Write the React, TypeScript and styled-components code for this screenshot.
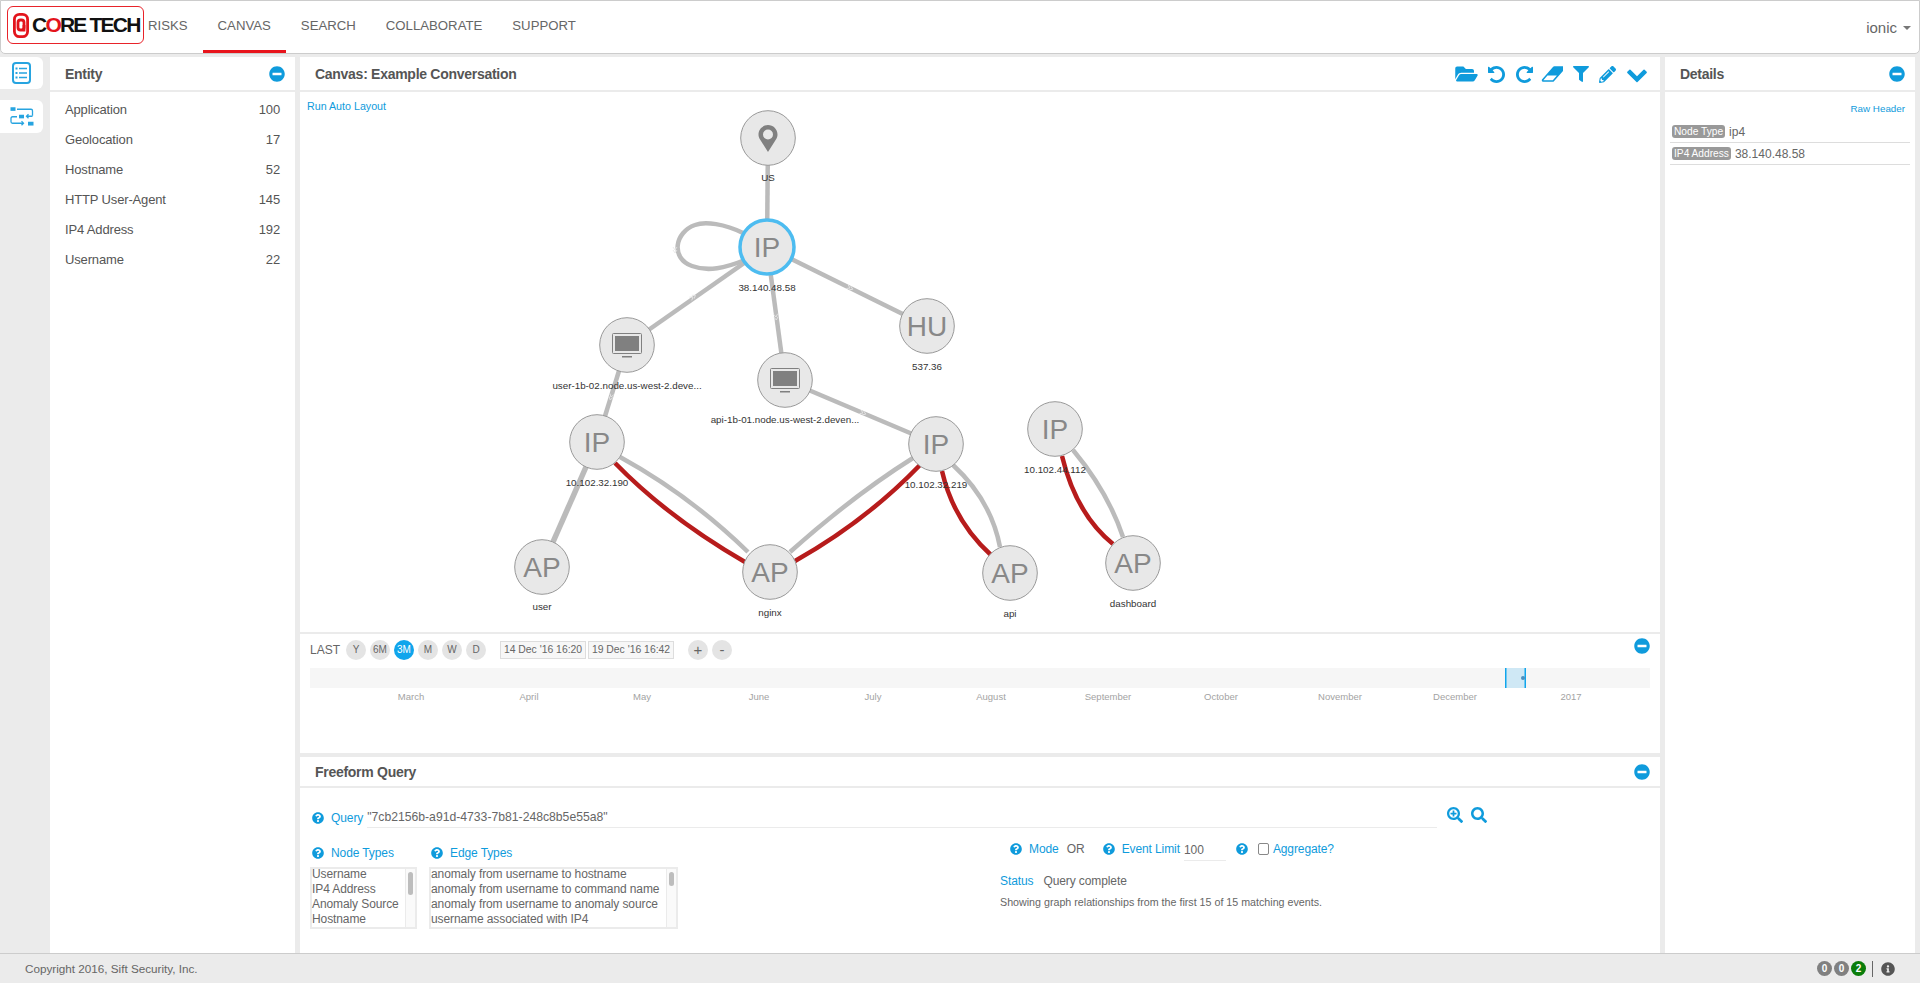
import React from "react";
import styled, { createGlobalStyle } from "styled-components";
import {
  FaFilter,
  FaFolderOpen,
  FaInfoCircle,
  FaMinusCircle,
  FaPencilAlt,
  FaQuestionCircle,
  FaSearch,
  FaSearchPlus,
} from "react-icons/fa";

const BLUE = "#0f9bdc";
const FONT = `"Liberation Sans", Arial, sans-serif`;

const GlobalStyle = createGlobalStyle`
  html, body {
    margin: 0;
    padding: 0;
    height: 100%;
    overflow: hidden;
    background: #ebebeb;
    font-family: ${FONT};
    color: #666;
  }
  * {
    box-sizing: border-box;
  }
`;

const Page = styled.div`
  display: flex;
  flex-direction: column;
  height: 100vh;
`;

const Header = styled.header`
  display: flex;
  align-items: stretch;
  flex: 0 0 54px;
  padding-left: 6px;
  background: #fff;
  border: 1px solid #ccc;
  border-radius: 0 0 5px 5px;
`;

const Logo = styled.div`
  display: flex;
  align-items: center;
  gap: 3px;
  align-self: flex-start;
  width: 137px;
  height: 38px;
  margin-top: 5px;
  padding-left: 5px;
  border: 1px solid #e8232a;
  border-radius: 6px;
`;

const LogoText = styled.span`
  font-size: 21px;
  font-weight: 700;
  letter-spacing: -1.8px;
  color: #111;
  white-space: nowrap;

  em {
    font-style: normal;
    color: #e3141c;
  }
`;

const Nav = styled.nav`
  display: flex;
  margin-left: -11px;
`;

const NavItem = styled.a<{ $active?: boolean }>`
  display: flex;
  align-items: center;
  padding: 0 15px;
  font-size: 13.2px;
  color: #666;
  border-bottom: 3px solid ${({ $active }) => ($active ? "#e8141c" : "transparent")};
`;

const UserMenu = styled.div`
  display: flex;
  align-items: center;
  gap: 6px;
  margin-left: auto;
  padding: 1px 8px 0 0;
  font-size: 15px;
  color: #666;

  &::after {
    content: "";
    border-top: 4px solid #777;
    border-left: 4px solid transparent;
    border-right: 4px solid transparent;
  }
`;

const Main = styled.main`
  display: grid;
  grid-template-columns: 45px 245px 1360px 250px;
  column-gap: 5px;
  flex: 1;
  min-height: 0;
  padding-top: 3px;
`;

const Sidebar = styled.div`
  display: flex;
  flex-direction: column;
  gap: 11px;
  padding-right: 2px;
`;

const SideTab = styled.div<{ $tall?: boolean }>`
  display: flex;
  align-items: center;
  justify-content: center;
  height: ${({ $tall }) => ($tall ? "33px" : "32px")};
  background: #fff;
  border-radius: 0 6px 6px 0;
`;

const Panel = styled.section`
  display: flex;
  flex-direction: column;
  height: 100%;
  background: #fff;
`;

const PanelHeader = styled.div<{ $compact?: boolean }>`
  display: flex;
  align-items: center;
  justify-content: space-between;
  flex: 0 0 ${({ $compact }) => ($compact ? "31px" : "35px")};
  padding: ${({ $compact }) => ($compact ? "0" : "1px")} 10px 0 15px;
  border-bottom: 2px solid #ebebeb;
`;

const PanelTitle = styled.h2`
  margin: 0;
  font-size: 14px;
  font-weight: 700;
  letter-spacing: -0.28px;
  color: #555;
`;

const CollapseIcon = styled(FaMinusCircle)`
  width: 16px;
  height: 16px;
  color: ${BLUE};
`;

const EntityList = styled.ul`
  margin: 0;
  padding: 2px 15px 0;
  list-style: none;
`;

const EntityRow = styled.li`
  display: flex;
  justify-content: space-between;
  align-items: center;
  height: 30px;
  font-size: 13px;
  letter-spacing: -0.15px;
  color: #555;
`;

const CenterColumn = styled.div`
  display: flex;
  flex-direction: column;
  gap: 4px;
  min-height: 0;
`;

const CanvasPanel = styled(Panel)`
  flex: 0 0 696px;
  height: auto;
`;

const Toolbar = styled.div`
  display: flex;
  align-items: center;
  margin-right: 2px;
  color: ${BLUE};
`;

const ToolIcon = styled.span<{ $w: number; $h: number; $ml: number }>`
  display: flex;
  margin-left: ${({ $ml }) => $ml}px;

  svg {
    width: ${({ $w }) => $w}px;
    height: ${({ $h }) => $h}px;
  }
`;

const GraphArea = styled.div`
  position: relative;
  flex: 0 0 542px;
  border-bottom: 2px solid #ebebeb;
`;

const GraphSvg = styled.svg`
  display: block;
`;

const AutoLayoutLink = styled.a`
  position: absolute;
  top: 8px;
  left: 7px;
  font-size: 10.7px;
  color: ${BLUE};
`;

const NodeLabel = styled.text`
  font-family: ${FONT};
  font-size: 9.8px;
  fill: #333;
  text-anchor: middle;
`;

const NodeGlyph = styled.text`
  font-family: ${FONT};
  font-size: 28px;
  fill: #888;
  text-anchor: middle;
`;

const Timeline = styled.div`
  display: flex;
  flex-direction: column;
  flex: 1;
`;

const RangeBar = styled.div`
  display: flex;
  align-items: center;
  flex: 0 0 30px;
  padding: 1px 10px 0 10px;
`;

const LastLabel = styled.span`
  width: 36px;
  font-size: 12px;
  color: #666;
`;

const RangeButton = styled.span<{ $active?: boolean }>`
  display: flex;
  align-items: center;
  justify-content: center;
  width: 20px;
  height: 20px;
  margin-right: 4px;
  border-radius: 50%;
  font-size: 10px;
  background: ${({ $active }) => ($active ? "#10a5ec" : "#e4e4e4")};
  color: ${({ $active }) => ($active ? "#fff" : "#666")};
`;

const DateBox = styled.span`
  display: flex;
  align-items: center;
  justify-content: center;
  width: 86px;
  height: 18px;
  margin-right: 2px;
  font-size: 10.4px;
  color: #666;
  background: #f7f7f7;
  border: 1px solid #ddd;
`;

const ZoomButton = styled(RangeButton)`
  font-size: 15px;
  line-height: 1;
`;

const DateGroup = styled.div`
  display: flex;
  margin: 0 12px 0 10px;
`;

const CollapseRight = styled.div`
  display: flex;
  margin-left: auto;
  margin-top: -8px;
`;

const AxisLabel = styled.text`
  font-family: ${FONT};
  font-size: 9.5px;
  fill: #a3a3a3;
  text-anchor: middle;
`;

const QueryPanel = styled(Panel)`
  flex: 1;
  height: auto;
  min-height: 0;
`;

const QueryBody = styled.div`
  display: flex;
  flex-direction: column;
  padding: 20px 0 0 10px;
`;

const QueryRow = styled.div`
  display: flex;
  align-items: center;
`;

const HelpIcon = styled(FaQuestionCircle)<{ $ml?: number }>`
  flex: none;
  width: 12px;
  height: 12px;
  margin-left: ${({ $ml }) => $ml ?? 2}px;
  margin-right: 7px;
  color: ${BLUE};
`;

const BlueLabel = styled.label`
  font-size: 12px;
  letter-spacing: -0.1px;
  color: ${BLUE};
  white-space: nowrap;
`;

const QueryInput = styled.div`
  width: 1070px;
  height: 20px;
  margin-left: 4px;
  font-size: 12.2px;
  line-height: 18px;
  color: #666;
  border-bottom: 1px solid #ebebeb;
`;

const SearchIcons = styled.div`
  display: flex;
  gap: 8px;
  margin: -6px 0 0 10px;
  color: ${BLUE};

  svg {
    width: 16px;
    height: 16px;
  }
`;

const LowerRow = styled.div`
  display: flex;
  margin-top: 18px;
`;

const TypesColumn = styled.div`
  display: flex;
  gap: 12px;
  flex: 0 0 690px;
`;

const TypeGroup = styled.div`
  display: flex;
  flex-direction: column;
  gap: 7px;
`;

const ListBox = styled.div<{ $width: number }>`
  display: flex;
  width: ${({ $width }) => $width}px;
  height: 62px;
  border: 2px solid #ebebeb;
`;

const ListText = styled.div`
  flex: 1;
  font-size: 12px;
  line-height: 15px;
  letter-spacing: -0.1px;
  color: #666;
  padding-left: 0;
  margin-top: -2px;
  white-space: nowrap;
`;

const ScrollTrack = styled.div`
  flex: 0 0 10px;
  padding: 3px 2px 0;
  background: #fafafa;
  border-left: 1px solid #ebebeb;
`;

const ScrollThumb = styled.div<{ $height: number }>`
  height: ${({ $height }) => $height}px;
  border-radius: 3px;
  background: #bdbdbd;
`;

const OptionsColumn = styled.div`
  display: flex;
  flex-direction: column;
`;

const OptionRow = styled.div`
  display: flex;
  align-items: center;
  height: 20px;
  margin-left: 8px;
  margin-top: -7px;
`;

const OptionValue = styled.span<{ $underline?: boolean; $ml?: number }>`
  width: ${({ $underline }) => ($underline ? "42px" : "auto")};
  margin-left: ${({ $ml }) => $ml ?? 8}px;
  font-size: 12px;
  line-height: 18px;
  color: #666;
  border-bottom: ${({ $underline }) => ($underline ? "1px solid #ebebeb" : "none")};
  ${({ $underline }) => ($underline ? "margin-top: 3px; height: 20px;" : "")}
`;

const FakeCheckbox = styled.span`
  width: 11px;
  height: 12px;
  margin: 0 4px 0 3px;
  background: #fff;
  border: 1px solid #888;
  border-radius: 2px;
`;

const StatusRow = styled.div`
  display: flex;
  gap: 10px;
  margin-top: 15px;
  font-size: 12px;
  letter-spacing: -0.1px;
  color: #666;
`;

const StatusNote = styled.div`
  margin-top: 8px;
  font-size: 10.7px;
  color: #666;
`;

const DetailsBody = styled.div`
  display: flex;
  flex-direction: column;
  padding: 10px 5px 0;
`;

const RawHeaderLink = styled.a`
  align-self: flex-end;
  margin: 0 5px 6px 0;
  font-size: 9.8px;
  line-height: 13px;
  color: ${BLUE};
`;

const DetailRow = styled.div`
  display: flex;
  align-items: center;
  gap: 4px;
  height: 22px;
  padding-left: 2px;
  font-size: 12px;
  color: #666;
  border-bottom: 1px solid #ddd;
`;

const DetailBadge = styled.span`
  padding: 1px 2px;
  font-size: 10.2px;
  line-height: 11px;
  color: #fff;
  background: #999;
  border-radius: 3px;
`;

const Footer = styled.footer`
  display: flex;
  align-items: center;
  flex: 0 0 30px;
  padding: 0 25px 0 25px;
  font-size: 11.7px;
  color: #666;
  border-top: 1px solid #ccc;
`;

const FooterStatus = styled.div`
  display: flex;
  align-items: center;
  gap: 2px;
  margin-left: auto;
`;

const CountDot = styled.span<{ $ok?: boolean }>`
  display: flex;
  align-items: center;
  justify-content: center;
  width: 15px;
  height: 15px;
  border-radius: 50%;
  font-size: 10px;
  font-weight: 700;
  color: #fff;
  background: ${({ $ok }) => ($ok ? "#0a7d0a" : "#808080")};
`;

const FooterDivider = styled.span`
  width: 1px;
  height: 16px;
  margin: 0 6px 0 4px;
  background: #666;
`;

const InfoIcon = styled(FaInfoCircle)`
  width: 14px;
  height: 14px;
  color: #555;
`;

type GraphNode = {
  x: number;
  y: number;
  glyph?: string;
  icon?: "pin" | "host";
  label: string;
  labelY: number;
  selected?: boolean;
};

const nodes: GraphNode[] = [
  { x: 768, y: 138, icon: "pin", label: "US", labelY: 181 },
  { x: 767, y: 247, glyph: "IP", label: "38.140.48.58", labelY: 291, selected: true },
  { x: 627, y: 345, icon: "host", label: "user-1b-02.node.us-west-2.deve...", labelY: 389 },
  { x: 785, y: 380, icon: "host", label: "api-1b-01.node.us-west-2.deven...", labelY: 423 },
  { x: 927, y: 326, glyph: "HU", label: "537.36", labelY: 370 },
  { x: 597, y: 442, glyph: "IP", label: "10.102.32.190", labelY: 486 },
  { x: 936, y: 444, glyph: "IP", label: "10.102.32.219", labelY: 488 },
  { x: 1055, y: 429, glyph: "IP", label: "10.102.44.112", labelY: 473 },
  { x: 542, y: 567, glyph: "AP", label: "user", labelY: 610 },
  { x: 770, y: 572, glyph: "AP", label: "nginx", labelY: 616 },
  { x: 1010, y: 573, glyph: "AP", label: "api", labelY: 617 },
  { x: 1133, y: 563, glyph: "AP", label: "dashboard", labelY: 607 },
];

const grayEdges = [
  "M768 138 L767 247",
  "M743 233 C725 224 705 221 695 225 C675 232 670 258 692 266 C708 272 725 268 745 260",
  "M767 247 L627 345",
  "M767 247 L785 380",
  "M767 247 L927 326",
  "M627 345 L597 442",
  "M785 380 L936 444",
  "M620 457 Q690 495.5 748 552",
  "M913 458 Q854 495 790 552",
  "M953 465 Q991 500 1000 547",
  "M1073 450 Q1108 492 1123 537",
];

const redEdges = [
  "M615 463 Q668 517.5 745 562",
  "M920 465 Q866 521 795 561",
  "M942 471 Q953.5 521 991 555",
  "M1062 456 Q1076 514 1113 544",
];

const edgeMarks = [
  { x: 693, y: 297, r: -36 },
  { x: 776, y: 317, r: 83 },
  { x: 850, y: 288, r: 26 },
  { x: 611, y: 397, r: 107 },
  { x: 863, y: 413, r: 23 },
  { x: 675, y: 250, r: 90 },
];

const months = [
  ["March", 411],
  ["April", 529],
  ["May", 642],
  ["June", 759],
  ["July", 873],
  ["August", 991],
  ["September", 1108],
  ["October", 1221],
  ["November", 1340],
  ["December", 1455],
  ["2017", 1571],
] as const;

const entities = [
  ["Application", 100],
  ["Geolocation", 17],
  ["Hostname", 52],
  ["HTTP User-Agent", 145],
  ["IP4 Address", 192],
  ["Username", 22],
] as const;

const ranges = ["Y", "6M", "3M", "M", "W", "D"];

const EraserIcon = () => (
  <svg viewBox="0 0 1792 1792" fill="currentColor">
    <path d="M960 1408l336-384h-768l-336 384h768zm1013-1077q15 34 9.5 71.5t-30.5 65.5l-896 1024q-38 44-96 44h-768q-38 0-69.5-20.5t-47.5-54.5q-15-34-9.5-71.5t30.5-65.5l896-1024q38-44 96-44h768q38 0 70 20.5t47 54.5z" />
  </svg>
);

const UNDO_PATH =
  "M1664 896q0 156-61 298t-164 245-245 164-298 61q-172 0-327-72.5t-264-204.5q-7-10-6.5-22.5t8.5-20.5l137-138q10-9 25-9 16 2 23 12 73 95 179 147t225 52q104 0 198.5-40.5t163.5-109.5 109.5-163.5 40.5-198.5-40.5-198.5-109.5-163.5-163.5-109.5-198.5-40.5q-98 0-188 35.5t-160 101.5l137 138q31 30 14 69-17 40-59 40h-448q-26 0-45-19t-19-45v-448q0-42 40-59 39-17 69 14l130 129q107-101 244.5-156.5t284.5-55.5q156 0 298 61t245 164 164 245 61 298z";

const UndoIcon = () => (
  <svg viewBox="128 128 1536 1536" fill="currentColor">
    <path d={UNDO_PATH} />
  </svg>
);

const RedoIcon = () => (
  <svg viewBox="128 128 1536 1536" fill="currentColor">
    <path transform="matrix(-1 0 0 1 1792 0)" d={UNDO_PATH} />
  </svg>
);

const ChevronIcon = () => (
  <svg viewBox="0 0 1792 1792" fill="currentColor">
    <path d="M1683 808l-742 741q-19 19-45 19t-45-19l-742-741q-19-19-19-45.5t19-45.5l166-165q19-19 45-19t45 19l531 531 531-531q19-19 45-19t45 19l166 165q19 19 19 45.5t-19 45.5z" />
  </svg>
);

const ListIcon = () => (
  <svg width="19" height="22" viewBox="0 0 19 22" fill="none" stroke="#27a4e0">
    <rect x="1" y="1" width="17" height="20" rx="3" strokeWidth="2" />
    <path d="M7 6.5h8M7 11h8M7 15.5h8" strokeWidth="1.6" />
    <path d="M3.5 6.5h2M3.5 11h2M3.5 15.5h2" strokeWidth="1.8" />
  </svg>
);

const FlowIcon = () => (
  <svg width="24" height="21" viewBox="0 0 24 19.5" fill="none" stroke="#27a4e0" strokeWidth="1.3">
    <rect x="0.5" y="0.5" width="5" height="3.6" fill="#27a4e0" stroke="none" />
    <path d="M7 2.5H21a1.5 1.5 0 0 1 1.5 1.5V9" />
    <rect x="9" y="8" width="5" height="3.6" fill="#27a4e0" stroke="none" />
    <path d="M7 10H2.5A1.5 1.5 0 0 0 1 11.5V15a1.5 1.5 0 0 0 1.5 1.5H13" />
    <path d="M22.5 9.5H16.5M18.5 7.5l-2 2 2 2M11.5 14.5l2 2-2 2" />
    <rect x="18" y="15" width="5.5" height="3.8" fill="#27a4e0" stroke="none" />
  </svg>
);

const LogoMark = () => (
  <svg width="16" height="25" viewBox="0 0 16 25" fill="none" stroke="#e3141c" strokeWidth="2.8">
    <rect x="1.4" y="1.4" width="13.2" height="22.2" rx="5" />
    <rect x="5" y="7" width="6" height="10" rx="2.5" />
    <path d="M11 12v6.5" />
  </svg>
);

const PinGlyph = ({ x, y }: { x: number; y: number }) => (
  <path
    transform={`translate(${x - 9.5} ${y - 13})`}
    fill="#808080"
    fillRule="evenodd"
    d="M9.5 0C4.3 0 0 4.2 0 9.5c0 2 .6 3.3 1.4 4.8L9.5 27l8.1-12.7c.8-1.5 1.4-2.8 1.4-4.8C19 4.2 14.7 0 9.5 0zm0 14.5a5 5 0 1 1 0-10 5 5 0 0 1 0 10z"
  />
);

const HostGlyph = ({ x, y }: { x: number; y: number }) => (
  <g transform={`translate(${x - 15} ${y - 12})`}>
    <rect x="0.5" y="0.5" width="29" height="20" rx="1" fill="none" stroke="#808080" />
    <rect x="3" y="3" width="24" height="15" fill="#808080" />
    <rect x="10" y="23" width="10" height="1.5" fill="#808080" />
  </g>
);

const NetworkGraph = () => (
  <GraphSvg width="1360" height="540" viewBox="300 92 1360 540">
    {grayEdges.map((d) => (
      <path key={d} d={d} fill="none" stroke="#bbb" strokeWidth="4.5" />
    ))}
    <path d="M597 442 L542 567" fill="none" stroke="#bbb" strokeWidth="5.5" />
    {redEdges.map((d) => (
      <path key={d} d={d} fill="none" stroke="#b71c1c" strokeWidth="4.5" />
    ))}
    {edgeMarks.map((m) => (
      <path
        key={`${m.x}-${m.y}`}
        transform={`translate(${m.x} ${m.y}) rotate(${m.r})`}
        d="M-3 -2 L0 0 L-3 2 M0 -2 L3 0 L0 2"
        fill="none"
        stroke="#e6e6e6"
        strokeWidth="0.8"
      />
    ))}
    {nodes.map((n) => (
      <g key={n.label}>
        <circle
          cx={n.x}
          cy={n.y}
          r={n.selected ? 27 : 27.3}
          fill="#e8e8e8"
          stroke={n.selected ? "#4dbcf0" : "#999"}
          strokeWidth={n.selected ? 3.5 : 1}
        />
        {n.glyph && (
          <NodeGlyph x={n.x} y={n.y + 9.5}>
            {n.glyph}
          </NodeGlyph>
        )}
        {n.icon === "pin" && <PinGlyph x={n.x} y={n.y} />}
        {n.icon === "host" && <HostGlyph x={n.x} y={n.y} />}
        <NodeLabel x={n.x} y={n.labelY}>
          {n.label}
        </NodeLabel>
      </g>
    ))}
  </GraphSvg>
);

const TimelineChart = () => (
  <GraphSvg width="1360" height="45" viewBox="300 664 1360 45">
    <rect x="310" y="668" width="1340" height="20" fill="#f6f6f6" />
    <rect x="1505" y="668" width="21" height="20" fill="#cfe8f5" />
    <rect x="1505" y="668" width="1.5" height="20" fill="#10a5ec" />
    <rect x="1524.5" y="668" width="1.5" height="20" fill="#10a5ec" />
    <circle cx="1523" cy="678" r="2" fill="#4a8fc0" />
    {months.map(([name, x]) => (
      <AxisLabel key={name} x={x} y={700}>
        {name}
      </AxisLabel>
    ))}
  </GraphSvg>
);

export default function App() {
  return (
    <Page>
      <GlobalStyle />
      <Header>
        <Logo>
          <LogoMark />
          <LogoText>
            C<em>O</em>RE TECH
          </LogoText>
        </Logo>
        <Nav>
          <NavItem>RISKS</NavItem>
          <NavItem $active>CANVAS</NavItem>
          <NavItem>SEARCH</NavItem>
          <NavItem>COLLABORATE</NavItem>
          <NavItem>SUPPORT</NavItem>
        </Nav>
        <UserMenu>ionic</UserMenu>
      </Header>

      <Main>
        <Sidebar>
          <SideTab>
            <ListIcon />
          </SideTab>
          <SideTab $tall>
            <FlowIcon />
          </SideTab>
        </Sidebar>

        <Panel>
          <PanelHeader>
            <PanelTitle>Entity</PanelTitle>
            <CollapseIcon />
          </PanelHeader>
          <EntityList>
            {entities.map(([name, count]) => (
              <EntityRow key={name}>
                <span>{name}</span>
                <span>{count}</span>
              </EntityRow>
            ))}
          </EntityList>
        </Panel>

        <CenterColumn>
          <CanvasPanel>
            <PanelHeader>
              <PanelTitle>Canvas: Example Conversation</PanelTitle>
              <Toolbar>
                <ToolIcon $w={25} $h={20} $ml={0}>
                  <FaFolderOpen />
                </ToolIcon>
                <ToolIcon $w={17} $h={17} $ml={9}>
                  <UndoIcon />
                </ToolIcon>
                <ToolIcon $w={17} $h={17} $ml={11}>
                  <RedoIcon />
                </ToolIcon>
                <ToolIcon $w={22} $h={22} $ml={8}>
                  <EraserIcon />
                </ToolIcon>
                <ToolIcon $w={16} $h={16} $ml={10}>
                  <FaFilter />
                </ToolIcon>
                <ToolIcon $w={17} $h={17} $ml={10}>
                  <FaPencilAlt />
                </ToolIcon>
                <ToolIcon $w={22} $h={22} $ml={10}>
                  <ChevronIcon />
                </ToolIcon>
              </Toolbar>
            </PanelHeader>
            <GraphArea>
              <AutoLayoutLink>Run Auto Layout</AutoLayoutLink>
              <NetworkGraph />
            </GraphArea>
            <Timeline>
              <RangeBar>
                <LastLabel>LAST</LastLabel>
                {ranges.map((r) => (
                  <RangeButton key={r} $active={r === "3M"}>
                    {r}
                  </RangeButton>
                ))}
                <DateGroup>
                  <DateBox>14 Dec '16 16:20</DateBox>
                  <DateBox>19 Dec '16 16:42</DateBox>
                </DateGroup>
                <ZoomButton>+</ZoomButton>
                <ZoomButton>-</ZoomButton>
                <CollapseRight>
                  <CollapseIcon />
                </CollapseRight>
              </RangeBar>
              <TimelineChart />
            </Timeline>
          </CanvasPanel>

          <QueryPanel>
            <PanelHeader $compact>
              <PanelTitle>Freeform Query</PanelTitle>
              <CollapseIcon />
            </PanelHeader>
            <QueryBody>
              <QueryRow>
                <HelpIcon />
                <BlueLabel>Query</BlueLabel>
                <QueryInput>"7cb2156b-a91d-4733-7b81-248c8b5e55a8"</QueryInput>
                <SearchIcons>
                  <FaSearchPlus />
                  <FaSearch />
                </SearchIcons>
              </QueryRow>
              <LowerRow>
                <TypesColumn>
                  <TypeGroup>
                    <QueryRow>
                      <HelpIcon />
                      <BlueLabel>Node Types</BlueLabel>
                    </QueryRow>
                    <ListBox $width={107}>
                      <ListText>
                        Username
                        <br />
                        IP4 Address
                        <br />
                        Anomaly Source
                        <br />
                        Hostname
                      </ListText>
                      <ScrollTrack>
                        <ScrollThumb $height={23} />
                      </ScrollTrack>
                    </ListBox>
                  </TypeGroup>
                  <TypeGroup>
                    <QueryRow>
                      <HelpIcon />
                      <BlueLabel>Edge Types</BlueLabel>
                    </QueryRow>
                    <ListBox $width={249}>
                      <ListText>
                        anomaly from username to hostname
                        <br />
                        anomaly from username to command name
                        <br />
                        anomaly from username to anomaly source
                        <br />
                        username associated with IP4
                      </ListText>
                      <ScrollTrack>
                        <ScrollThumb $height={14} />
                      </ScrollTrack>
                    </ListBox>
                  </TypeGroup>
                </TypesColumn>
                <OptionsColumn>
                  <OptionRow>
                    <HelpIcon />
                    <BlueLabel>Mode</BlueLabel>
                    <OptionValue>OR</OptionValue>
                    <HelpIcon $ml={18} />
                    <BlueLabel>Event Limit</BlueLabel>
                    <OptionValue $underline $ml={4}>
                      100
                    </OptionValue>
                    <HelpIcon $ml={10} />
                    <FakeCheckbox />
                    <BlueLabel>Aggregate?</BlueLabel>
                  </OptionRow>
                  <StatusRow>
                    <BlueLabel>Status</BlueLabel>
                    <span>Query complete</span>
                  </StatusRow>
                  <StatusNote>Showing graph relationships from the first 15 of 15 matching events.</StatusNote>
                </OptionsColumn>
              </LowerRow>
            </QueryBody>
          </QueryPanel>
        </CenterColumn>

        <Panel>
          <PanelHeader>
            <PanelTitle>Details</PanelTitle>
            <CollapseIcon />
          </PanelHeader>
          <DetailsBody>
            <RawHeaderLink>Raw Header</RawHeaderLink>
            <DetailRow>
              <DetailBadge>Node Type</DetailBadge>
              ip4
            </DetailRow>
            <DetailRow>
              <DetailBadge>IP4 Address</DetailBadge>
              38.140.48.58
            </DetailRow>
          </DetailsBody>
        </Panel>
      </Main>

      <Footer>
        Copyright 2016, Sift Security, Inc.
        <FooterStatus>
          <CountDot>0</CountDot>
          <CountDot>0</CountDot>
          <CountDot $ok>2</CountDot>
          <FooterDivider />
          <InfoIcon />
        </FooterStatus>
      </Footer>
    </Page>
  );
}
